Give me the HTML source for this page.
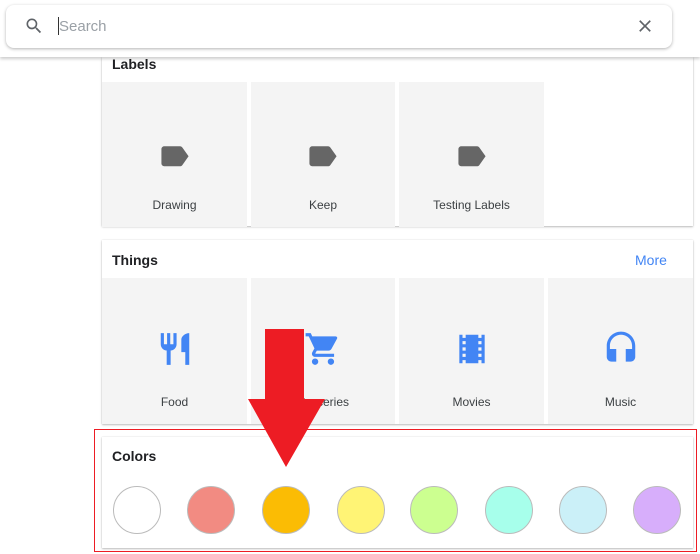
<!DOCTYPE html>
<html><head><meta charset="utf-8"><style>
*{box-sizing:border-box;margin:0;padding:0}
body{width:700px;height:554px;background:#fff;font-family:"Liberation Sans",sans-serif;position:relative;overflow:hidden;color:#202124}
.abs{position:absolute}
.card{position:absolute;left:102px;width:591px;background:#fff;box-shadow:0 1px 2px rgba(0,0,0,.25),0 0 1px rgba(0,0,0,.15)}
.title{position:absolute;left:10px;font-size:14px;font-weight:bold;color:#202124}
.tile{position:absolute;width:145px;height:145px;background:#f4f4f4}
.tile svg{position:absolute;left:50%;transform:translateX(-50%)}
.tile span{position:absolute;left:0;right:0;text-align:center;font-size:12px;color:#3c4043}
.c{position:absolute;top:486px;width:48px;height:48px;border-radius:50%;border:1px solid #bbb}
</style></head><body>
<div class="abs" style="left:0;top:0;width:700px;height:57px;background:#fff;box-shadow:0 2px 3px rgba(0,0,0,.2)"></div>
<div class="abs" style="left:6px;top:5px;width:666px;height:43px;background:#fff;border-radius:8px;box-shadow:0 1px 3px rgba(0,0,0,.3)">
<svg class="abs" style="left:18px;top:11px" width="20" height="20" viewBox="0 0 24 24"><path fill="#5f6368" d="M15.5 14h-.79l-.28-.27A6.47 6.47 0 0016 9.5 6.5 6.5 0 109.5 16c1.61 0 3.09-.59 4.23-1.57l.27.28v.79l5 4.99L20.49 19l-4.99-5zm-6 0C7.01 14 5 11.99 5 9.5S7.01 5 9.5 5 14 7.01 14 9.5 11.99 14 9.5 14z"/></svg>
<div class="abs" style="left:52px;top:12px;width:1px;height:18px;background:#333"></div>
<div class="abs" style="left:53px;top:13px;font-size:15px;color:#9aa0a6">Search</div>
<svg class="abs" style="left:629px;top:11px" width="20" height="20" viewBox="0 0 24 24"><path fill="#5f6368" d="M19 6.41L17.59 5 12 10.59 6.41 5 5 6.41 10.59 12 5 17.59 6.41 19 12 13.41 17.59 19 19 17.59 13.41 12z"/></svg>
</div>

<div class="card" style="top:57px;height:169px;z-index:-1">
<div class="title" style="top:-1px">Labels</div>
</div>
<div class="tile" style="left:102px;top:82px"><svg style="top:60px" width="30" height="30" viewBox="2 2 21 21"><path fill="#666" d="M17.63 5.84C17.27 5.33 16.67 5 16 5L5 5.01C3.9 5.01 3 5.9 3 7v10c0 1.1.9 1.99 2 1.99L16 19c.67 0 1.27-.33 1.63-.84L22 12l-4.37-6.16z"/></svg><span style="top:116px">Drawing</span></div>
<div class="tile" style="left:251px;top:82px;width:144px"><svg style="top:60px" width="30" height="30" viewBox="2 2 21 21"><path fill="#666" d="M17.63 5.84C17.27 5.33 16.67 5 16 5L5 5.01C3.9 5.01 3 5.9 3 7v10c0 1.1.9 1.99 2 1.99L16 19c.67 0 1.27-.33 1.63-.84L22 12l-4.37-6.16z"/></svg><span style="top:116px">Keep</span></div>
<div class="tile" style="left:399px;top:82px"><svg style="top:60px" width="30" height="30" viewBox="2 2 21 21"><path fill="#666" d="M17.63 5.84C17.27 5.33 16.67 5 16 5L5 5.01C3.9 5.01 3 5.9 3 7v10c0 1.1.9 1.99 2 1.99L16 19c.67 0 1.27-.33 1.63-.84L22 12l-4.37-6.16z"/></svg><span style="top:116px">Testing Labels</span></div>

<div class="card" style="top:240px;height:184px">
<div class="title" style="top:12px">Things</div>
<div class="abs" style="left:533px;top:12px;font-size:14px;color:#4285f4">More</div>
</div>
<div class="tile" style="left:102px;top:278px;height:146px"><svg style="top:52px" width="38" height="38" viewBox="0 0 24 24"><path fill="#4285f4" d="M11 9H9V2H7v7H5V2H3v7c0 2.12 1.66 3.84 3.75 3.97V22h2.5v-9.03C11.34 12.84 13 11.12 13 9V2h-2v7zm5-3v8h2.5v8H21V2c-2.76 0-5 2.24-5 4z"/></svg><span style="top:117px">Food</span></div>
<div class="tile" style="left:251px;top:278px;width:144px;height:146px"><svg style="top:52px" width="38" height="38" viewBox="0 0 24 24"><path fill="#4285f4" d="M7 18c-1.1 0-1.99.9-1.99 2S5.9 22 7 22s2-.9 2-2-.9-2-2-2zM1 2v2h2l3.6 7.59-1.35 2.45c-.16.28-.25.61-.25.96 0 1.1.9 2 2 2h12v-2H7.42c-.14 0-.25-.11-.25-.25l.03-.12.9-1.63h7.45c.75 0 1.41-.41 1.75-1.03l3.58-6.49A1.003 1.003 0 0020 4H5.21l-.94-2H1zm16 16c-1.1 0-1.99.9-1.99 2s.89 2 1.99 2 2-.9 2-2-.9-2-2-2z"/></svg><span style="top:117px">Groceries</span></div>
<div class="tile" style="left:399px;top:278px;height:146px"><svg style="top:52px" width="38" height="38" viewBox="0 0 24 24"><path fill="#4285f4" d="M18 3v2h-2V3H8v2H6V3H4v18h2v-2h2v2h8v-2h2v2h2V3h-2zM8 17H6v-2h2v2zm0-4H6v-2h2v2zm0-4H6V7h2v2zm10 8h-2v-2h2v2zm0-4h-2v-2h2v2zm0-4h-2V7h2v2z"/></svg><span style="top:117px">Movies</span></div>
<div class="tile" style="left:548px;top:278px;height:146px"><svg style="top:52px" width="38" height="38" viewBox="0 0 24 24"><path fill="#4285f4" d="M12 1c-4.97 0-9 4.03-9 9v7c0 1.66 1.34 3 3 3h3v-8H5v-2c0-3.87 3.13-7 7-7s7 3.13 7 7v2h-4v8h3c1.66 0 3-1.34 3-3v-7c0-4.97-4.03-9-9-9z"/></svg><span style="top:117px">Music</span></div>

<div class="card" style="top:437px;height:111px">
<div class="title" style="top:11px">Colors</div>
</div>
<div class="c" style="left:113px;background:#fff"></div>
<div class="c" style="left:187px;background:#f28b82"></div>
<div class="c" style="left:262px;background:#fbbc04"></div>
<div class="c" style="left:337px;background:#fff475"></div>
<div class="c" style="left:410px;background:#ccff90"></div>
<div class="c" style="left:485px;background:#a7ffeb"></div>
<div class="c" style="left:559px;background:#cbf0f8"></div>
<div class="c" style="left:633px;background:#d7aefb"></div>

<div class="abs" style="left:94px;top:429px;width:603px;height:123px;border:1.5px solid #ed1c24"></div>
<svg class="abs" style="left:0;top:0" width="700" height="554"><path fill="#ed1c24" d="M265 329H304V399H325L286 467L248 399H265Z"/></svg>
</body></html>
